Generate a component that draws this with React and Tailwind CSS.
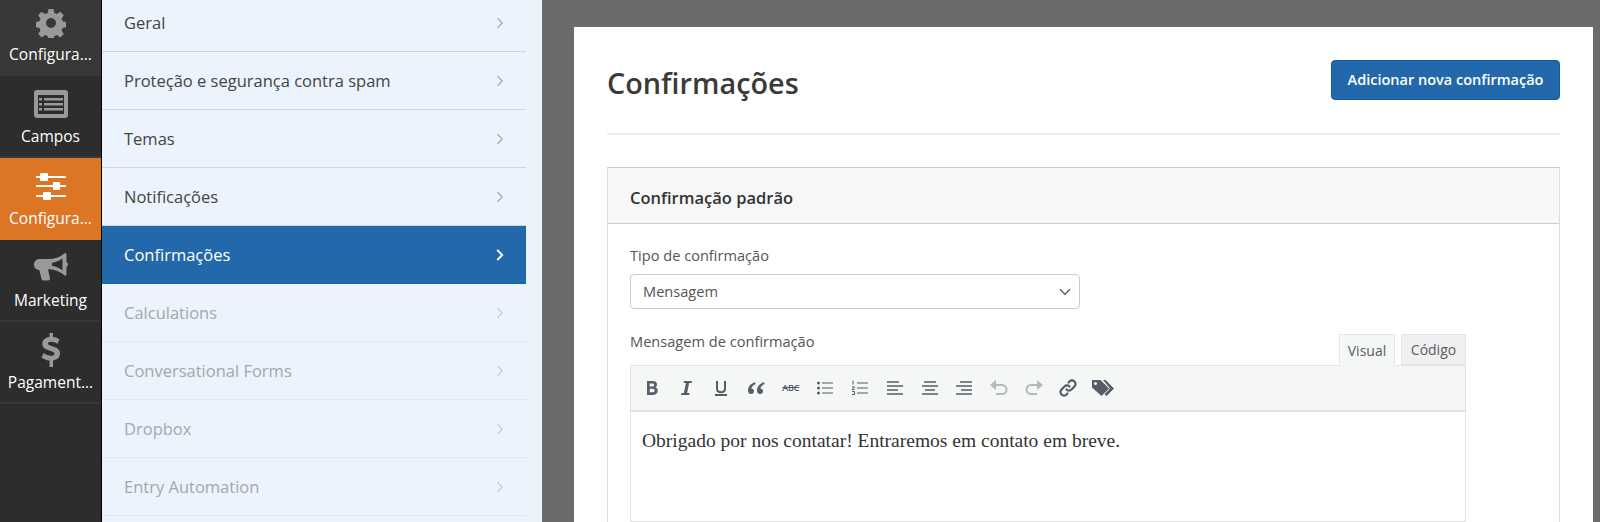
import React from "react";
import { ChevronDown, ChevronRight } from "lucide-react";

const builderItems = [
  { label: "Configura...", icon: "gear" },
  { label: "Campos", icon: "fields" },
  { label: "Configura...", icon: "sliders", active: true },
  { label: "Marketing", icon: "megaphone" },
  { label: "Pagament...", icon: "dollar" },
];

const settingsItems = [
  { label: "Geral" },
  { label: "Proteção e segurança contra spam" },
  { label: "Temas" },
  { label: "Notificações" },
  { label: "Confirmações", active: true },
  { label: "Calculations", muted: true },
  { label: "Conversational Forms", muted: true },
  { label: "Dropbox", muted: true },
  { label: "Entry Automation", muted: true },
];

// Hand-drawn sidebar icons
function BuilderIcon({ name }) {
  if (name === "gear") {
    return (
      <svg width="30" height="30" viewBox="0 0 30 30" fill="#999">
        <path
          fillRule="evenodd"
          d="M12.5 1h5l.8 4 2.6 1.1 3.4-2.3 3.5 3.5-2.3 3.4 1.1 2.6 4 .8v5l-4 .8-1.1 2.6 2.3 3.4-3.5 3.5-3.4-2.3-2.6 1.1-.8 4h-5l-.8-4-2.6-1.1-3.4 2.3-3.5-3.5 2.3-3.4-1.1-2.6-4-.8v-5l4-.8 1.1-2.6-2.3-3.4 3.5-3.5 3.4 2.3 2.6-1.1zM15 10a5 5 0 1 0 0 10 5 5 0 0 0 0-10z"
        />
      </svg>
    );
  }
  if (name === "fields") {
    return (
      <svg width="34" height="28" viewBox="0 0 34 28" fill="#999">
        <path
          fillRule="evenodd"
          d="M3 0h28a3 3 0 0 1 3 3v22a3 3 0 0 1-3 3H3a3 3 0 0 1-3-3V3a3 3 0 0 1 3-3zm1 5v19h26V5z"
        />
        <path d="M5 8h3v2.500H5zM10 8h19v2.500H10zM5 13h3v2.500H5zM10 13h19v2.500H10zM5 18h3v2.500H5zM10 18h19v2.500H10z" />
      </svg>
    );
  }
  if (name === "sliders") {
    return (
      <svg width="30" height="28" viewBox="0 0 30 28" fill="#fff">
        <path d="M0 4h30v2H0zM0 13h30v2H0zM0 23h30v2H0z" />
        <rect x="4" y="1" width="8" height="8" rx="1" />
        <rect x="17" y="10" width="7" height="8" rx="1" />
        <rect x="7" y="20" width="8" height="8" rx="1" />
      </svg>
    );
  }
  if (name === "megaphone") {
    return (
      <svg width="34" height="30" viewBox="0 0 34 30" fill="#999">
        <path
          fillRule="evenodd"
          d="M31 0c1 0 1.500.7 1.500 1.500V9c1 .5 1.500 1.300 1.500 2.300s-.5 1.900-1.500 2.400v7.500c0 .8-.6 1.500-1.500 1.500-4-3.500-9-6-15-6.500l-2 0 2 9c.2 1.300-.6 2.300-1.800 2.300H9.500c-1 0-1.700-.5-2-1.400L5.300 17C2 17 0 14.500 0 11.500S2.300 6 5.500 6H16C22 5.500 27 3.500 31 0zm-2.500 5.500c-3 2.200-6.500 3.600-10.500 4.300v3c4 .7 7.500 2.200 10.500 4.400z"
        />
      </svg>
    );
  }
  return (
    <svg width="20" height="34" viewBox="0 0 20 34" fill="#999">
      <path d="M8.500 0h3.500v4c2.500.3 4.800 1.200 6.500 2.400l-2 4.400c-2-1.300-4.300-2.100-6.500-2.100-2 0-3 .7-3 1.800 0 1.200 1.300 1.800 4.500 2.800 4.500 1.400 7.500 3.200 7.500 7.200 0 3.800-2.700 6.300-7 6.900V34H8.500v-6.500c-3.200-.3-6-1.400-8-3l2.200-4.500c2.200 1.700 4.900 2.800 7.300 2.800 2.200 0 3.400-.8 3.400-2.100 0-1.300-1.400-2-4.300-2.900C4.200 16.400 1.300 14.700 1.300 10.800c0-3.500 2.700-6.100 7.200-6.700z" />
    </svg>
  );
}

// Toolbar glyphs of the rich text editor
function ToolbarIcon({ children, className = "" }) {
  return (
    <svg
      width="20"
      height="20"
      viewBox="0 0 20 20"
      fill="none"
      stroke="#555d66"
      strokeWidth="1.500"
      className={className}
    >
      {children}
    </svg>
  );
}

function Toolbar() {
  return (
    <div className="flex h-[46px] items-center gap-[14.7px] border-b-2 border-[#dfe0e0] bg-[#f5f6f6] pl-[11px]">
      <ToolbarIcon>
        <path
          fill="#555d66"
          stroke="none"
          fillRule="evenodd"
          d="M5 3h6c2.500 0 4 1.300 4 3.500 0 1.300-.7 2.300-1.800 2.800 1.500.4 2.500 1.600 2.500 3.300 0 2.600-1.800 4.400-4.500 4.400H5zm2.700 2.400v3h2.800c1 0 1.700-.6 1.700-1.500s-.6-1.500-1.700-1.500zm0 5.300v3.600h3c1.200 0 2-.7 2-1.800s-.8-1.800-2-1.800z"
        />
      </ToolbarIcon>
      <ToolbarIcon>
        <path fill="#555d66" stroke="none" d="M7 3h8l-.4 2h-2.500l-2 10h2.500l-.4 2H4l.4-2h2.500l2-10H6.600z" />
      </ToolbarIcon>
      <ToolbarIcon>
        <path strokeWidth="2" d="M6 3v7.500c0 5 8 5 8 0V3" />
        <path strokeWidth="2" d="M4 17h12" />
      </ToolbarIcon>
      <ToolbarIcon>
        <path
          fill="#555d66"
          stroke="none"
          d="M9 4C5 5.500 2 8.500 2 12.500 2 15 3.500 16 5 16c1.800 0 3-1.200 3-2.800 0-1.500-1.200-2.600-2.700-2.600.3-1.800 2-3.500 4.200-4.600zM18 4c-4 1.500-7 4.500-7 8.500 0 2.500 1.500 3.500 3 3.500 1.800 0 3-1.200 3-2.800 0-1.500-1.200-2.600-2.700-2.600.3-1.800 2-3.500 4.200-4.600z"
        />
      </ToolbarIcon>
      <span className="flex w-[20px] items-center justify-center font-['Open_Sans',sans-serif] text-[9px] font-semibold tracking-[-0.2px] text-[#555d66] line-through">
        ABC
      </span>
      <ToolbarIcon>
        <circle cx="3.500" cy="5" r="1.500" fill="#555d66" stroke="none" />
        <circle cx="3.500" cy="10" r="1.500" fill="#555d66" stroke="none" />
        <circle cx="3.500" cy="15" r="1.500" fill="#555d66" stroke="none" />
        <path strokeWidth="1" d="M7 5h11M7 10h11M7 15h11" />
      </ToolbarIcon>
      <ToolbarIcon>
        <path stroke="#555d66" strokeWidth="1" d="M3 2.500v4M2 9h2.500l-2.500 2.500h2.500M2 13.500h2.500v3H2" />
        <path strokeWidth="1" d="M7 5h11M7 10h11M7 15h11" />
      </ToolbarIcon>
      <ToolbarIcon>
        <path d="M2 4h12M2 8h16M2 12h11M2 16h16" />
      </ToolbarIcon>
      <ToolbarIcon>
        <path d="M4 4h12M2 8h16M5 12h10M2 16h16" />
      </ToolbarIcon>
      <ToolbarIcon>
        <path d="M6 4h12M2 8h16M7 12h11M2 16h16" />
      </ToolbarIcon>
      <ToolbarIcon>
        <path stroke="#b4b9be" strokeWidth="2" d="M3 7h10a4.500 4.500 0 0 1 0 9H7" />
        <path fill="#b4b9be" stroke="none" d="M7 2v10L1 7z" />
      </ToolbarIcon>
      <ToolbarIcon>
        <path stroke="#b4b9be" strokeWidth="2" d="M17 7H7a4.500 4.500 0 0 0 0 9h6" />
        <path fill="#b4b9be" stroke="none" d="M13 2v10l6-5z" />
      </ToolbarIcon>
      <ToolbarIcon>
        <path
          strokeWidth="2.200"
          strokeLinecap="round"
          d="M8.500 11.500a3.500 3.500 0 0 0 5 0l3-3a3.500 3.500 0 0 0-5-5l-1 1M11.500 8.500a3.500 3.500 0 0 0-5 0l-3 3a3.500 3.500 0 0 0 5 5l1-1"
        />
      </ToolbarIcon>
      <svg width="24" height="20" viewBox="0 0 24 20" fill="#555d66" className="-ml-[2px]">
        <path
          fillRule="evenodd"
          d="M1 2h8.500L18 10.500 10.500 18 1 9.500zm3.500 2a1.500 1.500 0 1 0 0 3 1.500 1.500 0 0 0 0-3z"
        />
        <path d="M12 2h2.500L23 10.500 15.500 18l-2-1.800 5.500-5.700z" />
      </svg>
    </div>
  );
}

function App() {
  return (
    <div className="flex h-[522px] w-[1600px] overflow-hidden bg-[#6b6b6b] font-['Open_Sans',sans-serif]">
      {/* Builder sidebar */}
      <aside className="-mt-[6px] h-[528px] w-[102px] shrink-0 border-r-[1px] border-black bg-[#2d2d2d]">
        {builderItems.map((item, i) => (
          <div
            key={i}
            className={`flex h-[82px] flex-col items-center justify-center border-b-2 text-[15.5px] leading-[19px] text-white ${
              i === 0 ? "gap-[5px] border-[#383838] bg-[#383838] pt-[2px]" : "gap-[6px]"
            } ${item.active ? "border-[#dc7524] bg-[#dc7524]" : ""} ${
              i > 0 && !item.active ? "border-[#383838]" : ""
            }`}
          >
            <div className="flex h-[34px] items-center justify-center">
              <BuilderIcon name={item.icon} />
            </div>
            <span>{item.label}</span>
          </div>
        ))}
      </aside>

      {/* Settings list */}
      <nav className="-mt-[6px] h-[528px] w-[440px] shrink-0 bg-[#ebf3fc] pr-[16px]">
        {settingsItems.map((item) => (
          <div
            key={item.label}
            className={`flex h-[58px] items-center justify-between border-b pl-[22px] pr-[17px] text-[16.5px] ${
              item.active
                ? "border-[#036aab] bg-[#2268ab] font-medium text-white"
                : item.muted
                  ? "border-[#dfe7f1] text-[#a3a8ad]"
                  : "border-[#ced7e0] text-[#444444]"
            }`}
          >
            <span className="mt-[2px]">{item.label}</span>
            <ChevronRight
              size={18}
              strokeWidth={item.active ? 2.5 : 1.5}
              className={item.active ? "text-white" : item.muted ? "text-[#c5cbd2]" : "text-[#a6a6a6]"}
            />
          </div>
        ))}
      </nav>

      {/* Confirmations panel */}
      <main className="mt-[27px] ml-[32px] h-[495px] w-[1019px] shrink-0 bg-white pl-[33px] pr-[33px]">
        <div className="flex h-[108px] items-center justify-between border-b-2 border-[#eeeeee]">
          <h1 className="mt-[6px] text-[28.8px] font-semibold text-[#3a3a3a]">Confirmações</h1>
          <button className="h-[40px] w-[229px] rounded-[4px] border border-[#0e5ca8] bg-[#2268ab] text-[14.5px] font-semibold text-white">
            Adicionar nova confirmação
          </button>
        </div>

        <section className="mt-[32px] border border-[#dddddd] border-t-[#cccccc]">
          <header className="flex h-[56px] items-center border-b border-[#cccccc] bg-[#f7f7f7] pl-[22px] pt-[5px] text-[16.5px] font-semibold text-[#333333]">
            Confirmação padrão
          </header>
          <div className="pt-[20px] pl-[22px] pr-[22px]">
            <label className="block text-[14.6px] leading-[22px] text-[#555555]">Tipo de confirmação</label>
            <div className="mt-[8px] flex h-[35px] w-[450px] items-center justify-between rounded-[4px] border border-[#cccccc] bg-white pl-[12px] pr-[5px] text-[14.6px] text-[#555555]">
              <span className="mt-[1px]">Mensagem</span>
              <ChevronDown size={18} strokeWidth={2.2} className="text-[#666666]" />
            </div>

            <div className="mt-[11px] w-[836px]">
              <div className="flex h-[45px] items-end justify-between">
                <span className="mb-[13px] text-[14.6px] leading-[22px] text-[#555555]">Mensagem de confirmação</span>
                <div className="flex gap-[6px] text-[14px]">
                  <span className="-mb-[1px] flex h-[32px] w-[56px] items-center justify-center border border-b-0 border-[#e5e5e5] bg-[#f5f6f6] text-[#555d66]">
                    Visual
                  </span>
                  <span className="flex h-[31px] w-[65px] items-center justify-center border border-[#e5e5e5] bg-[#f0f0f0] text-[#555d66]">
                    Código
                  </span>
                </div>
              </div>
              <div className="border border-[#e5e5e5]">
                <Toolbar />
                <div className="h-[109px] bg-white pt-[17px] pl-[11px] font-['Liberation_Serif',serif] text-[19.5px] leading-[24px] text-[#333333]">
                  Obrigado por nos contatar! Entraremos em contato em breve.
                </div>
                <div className="h-[10px] border-t border-[#e5e5e5]" />
              </div>
            </div>
          </div>
        </section>
      </main>
    </div>
  );
}

export default App;
